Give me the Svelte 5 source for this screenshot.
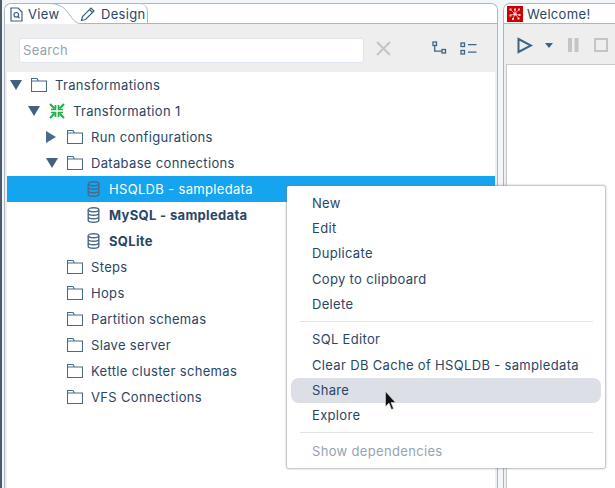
<script lang="ts">
    type Row = { label: string; depth: number; arrow?: "open" | "closed"; icon: "folder" | "db" | "trans"; bold?: boolean; selected?: boolean };

    const rows: Row[] = [
        { label: "Transformations", depth: 0, arrow: "open", icon: "folder" },
        { label: "Transformation 1", depth: 1, arrow: "open", icon: "trans" },
        { label: "Run configurations", depth: 2, arrow: "closed", icon: "folder" },
        { label: "Database connections", depth: 2, arrow: "open", icon: "folder" },
        { label: "HSQLDB - sampledata", depth: 3, icon: "db", selected: true },
        { label: "MySQL - sampledata", depth: 3, icon: "db", bold: true },
        { label: "SQLite", depth: 3, icon: "db", bold: true },
        { label: "Steps", depth: 2, icon: "folder" },
        { label: "Hops", depth: 2, icon: "folder" },
        { label: "Partition schemas", depth: 2, icon: "folder" },
        { label: "Slave server", depth: 2, icon: "folder" },
        { label: "Kettle cluster schemas", depth: 2, icon: "folder" },
        { label: "VFS Connections", depth: 2, icon: "folder" }
    ];

    const menuTop = ["New", "Edit", "Duplicate", "Copy to clipboard", "Delete"];
    const menuMid = ["SQL Editor", "Clear DB Cache of HSQLDB - sampledata", "Share", "Explore"];
</script>

<div class="window">
    <div class="panel left">
        <div class="tabs">
            <svg class="tab-curve" width="80" height="22" viewBox="0 0 80 22" fill="none" stroke="#a9b6c8" stroke-width="1">
                <path d="M44 .5C54 .5 59 4 64 11S71 20.500 76 20.500" />
            </svg>
            <div class="tab active">
                <svg width="13" height="15" viewBox="0 0 13 15" fill="none" stroke="#3d5f80" stroke-width="1.200">
                    <path d="M1 1h7l4 4v9h-11z" />
                    <circle cx="6.300" cy="7.800" r="2.300" />
                    <path d="M8 9.500l1.500 1.500" />
                </svg>
                <span>View</span>
            </div>
            <div class="tab design">
                <svg width="16" height="16" viewBox="0 0 16 16" fill="none" stroke="#3d5f80" stroke-width="1.200">
                    <path d="M1.500 14.500l1-4 8.500-8.500 3 3-8.500 8.500z" />
                    <path d="M9.500 3.500l3 3" />
                </svg>
                <span>Design</span>
            </div>
            <div class="tab-rest"></div>
        </div>
        <div class="toolbar">
            <div class="search">Search</div>
            <svg class="clear" width="15" height="15" viewBox="0 0 15 15" stroke="#c4c4c4" stroke-width="2">
                <path d="M1 1l13 13M14 1l-13 13" />
            </svg>
            <svg class="tool-a" width="15" height="14" viewBox="0 0 15 14" fill="none" stroke="#3d6485" stroke-width="1.300">
                <rect x="1" y="1" width="3.500" height="3.500" />
                <rect x="10" y="8.500" width="3.500" height="3.500" />
                <path d="M2.700 4.500v5.700h7.300" />
            </svg>
            <svg class="tool-b" width="17" height="13" viewBox="0 0 17 13" fill="none" stroke="#3d6485" stroke-width="1.300">
                <rect x="1" y="1" width="3.500" height="3.500" />
                <rect x="1" y="8.500" width="3.500" height="3.500" />
                <path d="M8 2.700h8.500M8 10.200h8.500" />
            </svg>
        </div>
        <div class="tree">
            {#each rows as row}
                <div class="row" class:selected={row.selected} class:bold={row.bold}>
                    <div class="indent" style="width: {row.depth * 18 + 3}px"></div>
                    <div class="arrow">
                        {#if row.arrow === "open"}
                            <svg width="12" height="10" viewBox="0 0 12 10"><path d="M0 0h12l-6 10z" fill="#45607c" /></svg>
                        {:else if row.arrow === "closed"}
                            <svg width="10" height="12" viewBox="0 0 10 12"><path d="M0 0l10 6-10 6z" fill="#4d6a8a" /></svg>
                        {/if}
                    </div>
                    <div class="icon" class:db={row.icon === "db"}>
                        {#if row.icon === "folder"}
                            <svg width="16" height="14" viewBox="0 0 16 14" fill="none" stroke="#4a6a88" stroke-width="1.100">
                                <path d="M.5 13.500v-13h5.500l1.500 2.500h8v10.500zM.5 3h7" />
                            </svg>
                        {:else if row.icon === "trans"}
                            <svg width="16" height="16" viewBox="0 0 16 16" fill="none" stroke="#22b14c" stroke-width="2.200">
                                <path d="M1 1l4.500 4.500M15 1l-4.500 4.500M1 15l4.500-4.500M15 15l-4.500-4.500" />
                                <path d="M2 6.500h4.500v-4.500M14 6.500h-4.500v-4.500M2 9.500h4.500v4.500M14 9.500h-4.500v4.500" stroke-width="1.700" />
                            </svg>
                        {:else}
                            <svg width="13" height="16" viewBox="0 0 13 16" fill="none" stroke="#4a6a88" stroke-width="1.400">
                                <ellipse cx="6.500" cy="2.800" rx="5.300" ry="2" />
                                <path d="M1.200 2.800v10.400c0 1.100 2.400 2 5.300 2s5.300-.9 5.300-2v-10.400M1.200 6.300c0 1.100 2.400 2 5.300 2s5.300-.9 5.300-2M1.200 9.800c0 1.100 2.400 2 5.300 2s5.300-.9 5.300-2" />
                            </svg>
                        {/if}
                    </div>
                    <span>{row.label}</span>
                </div>
            {/each}
        </div>
    </div>
    <div class="panel right">
        <div class="tabs">
            <div class="welcome">
                <svg width="16" height="16" viewBox="0 0 16 16">
                    <rect width="16" height="16" fill="#cc0000" />
                    <path d="M3.500 3.500l4 4M12 3.500l-3 3M8 8v-4.500M8 8l-4.500 1M8 8l4 1M8 8l-2 4.500M8 8l3.500 4" stroke="#f2b8b8" stroke-width=".8" fill="none" />
                    <path d="M2.500 2.500h2v2h-2zM7 2.500h2v2h-2zM11 2.500h2v2h-2zM6.500 6.500h3v3h-3zM2.500 8.500h2v2h-2zM11.500 8h2v2h-2zM5 12h2v2h-2zM10.500 11.500h2v2h-2z" fill="#f6d6d6" />
                </svg>
                <span>Welcome!</span>
            </div>
        </div>
        <div class="toolbar small">
            <svg width="16" height="17" viewBox="0 0 16 17" fill="none" stroke="#3d6485" stroke-width="2">
                <path d="M1.500 2l12.500 6.500-12.500 6.500z" />
            </svg>
            <svg class="caret" width="8" height="5" viewBox="0 0 8 5"><path d="M0 0h8l-4 5z" fill="#3d6485" /></svg>
            <svg class="pause" width="11" height="14" viewBox="0 0 11 14" fill="#c4c4c4">
                <rect width="4" height="14" /><rect x="6.500" width="4" height="14" />
            </svg>
            <svg class="stop" width="14" height="14" viewBox="0 0 14 14" fill="none" stroke="#c4c4c4" stroke-width="2">
                <rect x="1" y="1" width="12" height="12" />
            </svg>
        </div>
        <div class="canvas"></div>
    </div>

    <div class="menu">
        {#each menuTop as item}
            <div class="item">{item}</div>
        {/each}
        <div class="sep"></div>
        {#each menuMid as item}
            <div class="item" class:hover={item === "Share"}>{item}</div>
        {/each}
        <div class="sep"></div>
        <div class="item disabled">Show dependencies</div>
    </div>

    <svg class="cursor" width="12" height="20" viewBox="0 0 12 20">
        <path d="M.5.500v15l3.500-3.500 2.500 6.500 2-1-2.500-6h4.500z" fill="#111" stroke="#ddd" stroke-width=".6" />
    </svg>
</div>

<style>
    :global(body) {
        margin: 0;
        background: #fff;
    }

    .window {
        position: relative;
        box-sizing: border-box;
        width: 615px;
        height: 488px;
        overflow: hidden;
        display: flex;
        gap: 5px;
        padding: 3px 0 0 2px;
        border-left: 2px solid #4f5c68;
        background: #f2f5fa;
        font-family: Inter, "Noto Sans", sans-serif;
        font-size: 13px;
        letter-spacing: 0.33px;
        color: #2a4666;
    }

    .panel {
        box-sizing: border-box;
        display: flex;
        flex-direction: column;
        background: #eeeeee;
        border-top: 1px solid #a9b6c8;
        border-left: 1px solid #a9b6c8;
        overflow: hidden;
    }

    .left {
        flex: none;
        width: 494px;
        border-right: 1px solid #a9b6c8;
        border-radius: 7px 7px 0 0;
    }

    .right {
        flex: 1;
        border-radius: 7px 0 0 0;
    }

    .tabs {
        position: relative;
        flex: none;
        display: flex;
        height: 20px;
        box-sizing: border-box;
        background: #fff;
    }

    .tab-curve {
        position: absolute;
        left: 0;
        top: -1px;
    }

    .tab {
        display: flex;
        align-items: center;
        box-sizing: border-box;
        flex: none;
    }

    .tab.active {
        width: 75px;
        gap: 5px;
        padding-left: 5px;
    }

    .tab.design {
        width: 68px;
        gap: 5px;
        border-right: 1px solid #a9b6c8;
        border-bottom: 1px solid #a9b6c8;
        border-radius: 0 7px 0 0;
    }

    .tab-rest {
        flex: 1;
        border-bottom: 1px solid #a9b6c8;
    }

    .welcome {
        display: flex;
        flex: 1;
        align-items: center;
        gap: 4px;
        padding-left: 3px;
        border-bottom: 1px solid #a9b6c8;
    }

    .toolbar {
        flex: none;
        display: flex;
        align-items: center;
        height: 48px;
        padding-left: 14px;
    }

    .search {
        box-sizing: border-box;
        width: 345px;
        height: 25px;
        margin-top: 5px;
        line-height: 23px;
        padding-left: 3px;
        background: #fff;
        border: 1px solid #dfe5ee;
        border-radius: 3px;
        color: #95a3b3;
    }

    .clear {
        margin-left: 12px;
    }

    .tool-a {
        margin-left: 41px;
    }

    .tool-b {
        margin-left: 13px;
    }

    .tree {
        flex: 1;
        margin: 0 2px;
        background: #fff;
    }

    .row {
        display: flex;
        align-items: center;
        height: 26px;
        white-space: nowrap;
    }

    .row.selected {
        background: #15a4ef;
        color: #fff;
    }

    .row.bold {
        font-weight: 700;
    }

    .indent {
        flex: none;
    }

    .arrow {
        flex: none;
        width: 21px;
        display: flex;
        align-items: center;
    }

    .icon {
        flex: none;
        width: 24px;
        display: flex;
        align-items: center;
    }

    .icon.db {
        padding-left: 2px;
        box-sizing: border-box;
    }

    .small {
        height: 40px;
        padding: 2px 0 0 13px;
        box-sizing: border-box;
    }

    .caret {
        margin-left: 12px;
    }

    .pause {
        margin-left: 15px;
    }

    .stop {
        margin-left: 15px;
    }

    .canvas {
        flex: 1;
        margin-left: 2px;
        background: #fff;
        border-top: 1px solid #c8c8c8;
        border-left: 1px solid #c8c8c8;
    }

    .menu {
        position: absolute;
        left: 285px;
        top: 186px;
        box-sizing: border-box;
        width: 318px;
        height: 282px;
        padding: 5px 4px;
        background: #fff;
        border-radius: 2px;
        box-shadow: 0 0 2px 1px rgba(120, 125, 135, 0.55);
    }

    .item {
        height: 25.2px;
        line-height: 25.2px;
        padding-left: 21px;
        border-radius: 8px;
        white-space: nowrap;
    }

    .item.hover {
        background: #dcdfe6;
    }

    .item.disabled {
        color: #95a3b3;
    }

    .sep {
        height: 1px;
        margin: 4px 8px 5.5px 9px;
        background: #e2e4e8;
    }

    .cursor {
        position: absolute;
        left: 383px;
        top: 391px;
    }
</style>
